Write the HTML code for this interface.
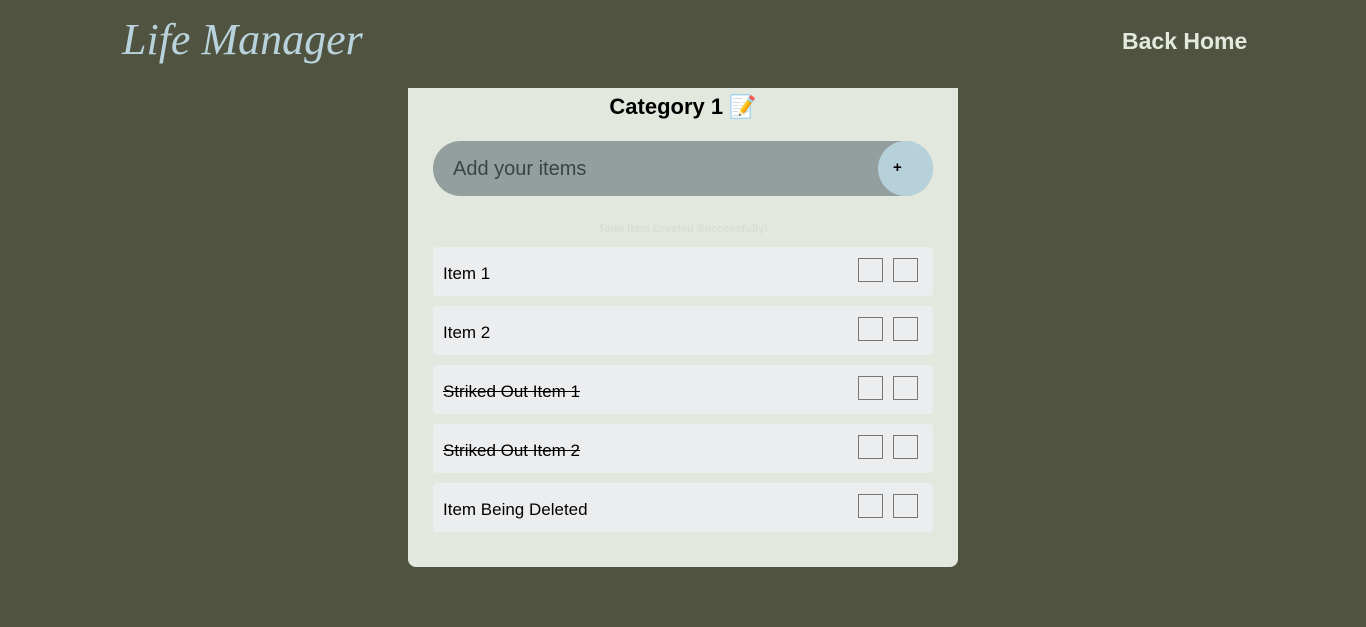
<!DOCTYPE html>
<html><head><style>
body{margin:0;width:1366px;height:627px;background:#4f533f;font-family:"Liberation Sans",sans-serif;position:relative;overflow:hidden}
.logo{position:absolute;left:122px;top:14px;font:italic 44px "Liberation Serif",serif;color:#b9d3dd}
.home{position:absolute;left:1122px;top:28px;font-weight:bold;font-size:23px;color:#e3e9dd}
.card{position:absolute;left:408px;top:88px;width:550px;height:479px;background:#e2e8de;border-radius:0 0 8px 8px}
h1{margin:0;position:absolute;top:6px;width:100%;text-align:center;font-size:22px;font-weight:900;color:#000}
.inp{position:absolute;left:25px;top:53px;width:500px;height:55px;border-radius:28px;background:#939f9f}
.inp span{position:absolute;left:20px;top:17px;font-size:20px;color:#3b4344}
.btn{position:absolute;right:0;top:0;width:55px;height:55px;border-radius:50%;background:#b7d1db;line-height:55px;font-size:15px;font-weight:bold}
.btn b{position:absolute;left:15px;top:-1px}
.msg{position:absolute;top:135px;width:100%;text-align:center;font-size:11px;font-weight:bold;color:#d8ded5}
.item{position:absolute;left:25px;width:500px;height:49px;background:#ecedef;border-radius:4px}
.item span{position:absolute;left:10px;top:17px;font-size:17px;color:#000}
.item i{position:absolute;top:11px;width:25px;height:24px;border:1px solid #777;box-sizing:border-box}
</style></head><body>
<div class="logo">Life Manager</div>
<div class="home">Back Home</div>
<div class="card">
<h1>Category 1 📝</h1>
<div class="inp"><span>Add your items</span><div class="btn"><b>+</b></div></div>
<div class="msg">Todo Item Created Successfully!</div>
<div class="item" style="top:159px"><span>Item 1</span><i style="left:425px"></i><i style="left:460px"></i></div>
<div class="item" style="top:218px"><span>Item 2</span><i style="left:425px"></i><i style="left:460px"></i></div>
<div class="item" style="top:277px"><span style="text-decoration:line-through">Striked Out Item 1</span><i style="left:425px"></i><i style="left:460px"></i></div>
<div class="item" style="top:336px"><span style="text-decoration:line-through">Striked Out Item 2</span><i style="left:425px"></i><i style="left:460px"></i></div>
<div class="item" style="top:395px"><span>Item Being Deleted</span><i style="left:425px"></i><i style="left:460px"></i></div>
</div>
</body></html>
